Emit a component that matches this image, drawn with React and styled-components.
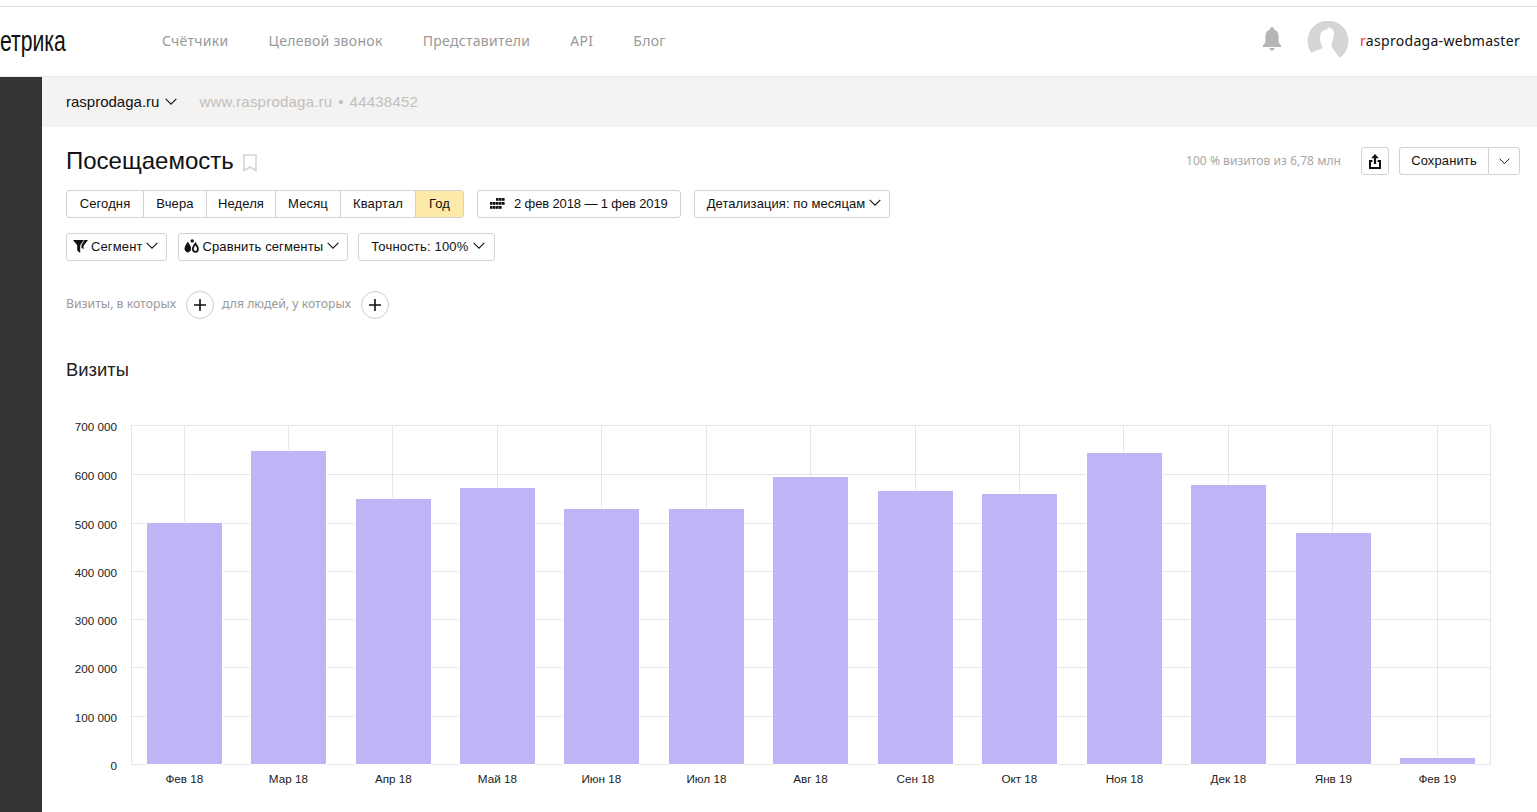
import React from "react";
import styled, { createGlobalStyle } from "styled-components";

const Global = createGlobalStyle`
  html, body { margin: 0; padding: 0; height: 100%; overflow: hidden; background: #fff; }
  body { font-family: "Liberation Sans", Arial, sans-serif; color: #000; }
  #root { height: 812px; }
`;

const Page = styled.div`
  width: 1537px;
  height: 812px;
  display: flex;
  flex-direction: column;
  overflow: hidden;
`;
const Header = styled.header`
  height: 69px;
  margin-top: 6px;
  border-top: 1px solid #dcdcdc;
  border-bottom: 1px solid #ebebeb;
  box-sizing: content-box;
  display: flex;
  align-items: center;
  padding-right: 17px;
  flex: none;
`;
const LogoBox = styled.div`
  width: 162px;
  flex: none;
  overflow: hidden;
  height: 100%;
  display: flex;
  align-items: center;
`;
const Logo = styled.span`
  display: inline-block;
  font-size: 29px;
  font-weight: 400;
  color: #111;
  transform: scaleX(0.73);
  transform-origin: left center;
`;
const Nav = styled.nav`
  display: flex;
  gap: 40px;
  flex: 1;
  margin-top: -2px;
`;
const NavItem = styled.a`
  font-family: "Noto Sans", sans-serif;
  font-size: 14px;
  color: #999;
  letter-spacing: 0.3px;
`;
const Bell = styled.svg`
  width: 20px;
  height: 26px;
  margin-right: 25px;
  margin-top: -3px;
`;
const Avatar = styled.svg`
  width: 42px;
  height: 40px;
  margin-right: 11px;
  margin-top: -1px;
`;
const UserName = styled.span`
  font-family: "Noto Sans", "Open Sans", sans-serif;
  font-size: 14px;
  color: #111;
  margin-top: -2px;
  letter-spacing: 0.3px;
  b { color: #f33; font-weight: 400; }
`;
const Body = styled.div`
  flex: 1;
  display: flex;
  min-height: 0;
`;
const Sidebar = styled.aside`
  width: 42px;
  background: #333;
  flex: none;
`;
const Main = styled.main`
  flex: 1;
  min-width: 0;
  display: flex;
  flex-direction: column;
`;
const SubHeader = styled.div`
  height: 50px;
  background: #f4f3f1;
  padding: 0 0 1px 24px;
  box-sizing: border-box;
  display: flex;
  align-items: center;
  font-size: 15px;
  flex: none;
`;
const SiteName = styled.span`
  color: #111;
  display: flex;
  align-items: center;
  gap: 6px;
`;
const SiteMeta = styled.span`
  margin-left: 22px;
  color: #c0c0c0;
  letter-spacing: 0.22px;
  word-spacing: 1.5px;
`;
const Content = styled.div`
  padding: 20px 17px 0 24px;
`;
const TitleRow = styled.div`
  height: 28px;
  display: flex;
  align-items: center;
`;
const Title = styled.h1`
  margin: 0;
  font-size: 24px;
  line-height: 28px;
  font-weight: 400;
  color: #111;
`;
const BookmarkIcon = styled.svg`
  width: 14px;
  height: 18px;
  margin-left: 9px;
  margin-top: 3px;
`;
const Coverage = styled.span`
  margin-left: auto;
  margin-right: 20px;
  margin-top: -2px;
  font-family: "Noto Sans", sans-serif;
  font-size: 12.1px;
  color: #a8a8a8;
`;
const Btn = styled.button`
  height: 28px;
  box-sizing: border-box;
  padding: 0 ${(p) => p.$pr ?? p.$pl ?? 12}px 2px ${(p) => p.$pl ?? 12}px;
  border: 1px solid #d2d2d2;
  border-radius: 3px;
  background: ${(p) => (p.$active ? "#fdeaa8" : "#fff")};
  color: #111;
  font: 13px "Liberation Sans", Arial, sans-serif;
  letter-spacing: ${(p) => p.$ls ?? 0.12}px;
  display: inline-flex;
  align-items: center;
  justify-content: center;
  gap: ${(p) => p.$gap ?? 4}px;
  margin-right: ${(p) => p.$mr ?? 0}px;
  white-space: nowrap;
  flex: none;
`;
const IconBtn = styled(Btn)`
  width: 28px;
  padding: 0;
  margin-right: 10px;
`;
const SaveGroup = styled.div`
  display: flex;
  width: 121px;
`;
const SaveBtn = styled(Btn)`
  flex: 1;
  border-radius: 3px 0 0 3px;
  border-right: 0;
  padding: 0 0 2px;
`;
const SaveArrow = styled(Btn)`
  width: 32px;
  padding: 0;
  border-radius: 0 3px 3px 0;
`;
const Row = styled.div`
  display: flex;
  margin-top: ${(p) => p.$mt}px;
  gap: ${(p) => p.$gap}px;
`;
const Group = styled.div`
  display: flex;
  margin-right: 3px;
`;
const SegBtn = styled(Btn)`
  border-radius: 0;
  margin-left: -1px;
  width: ${(p) => p.$w}px;
  padding: 0 0 2px;
  &:first-child { margin-left: 0; border-radius: 3px 0 0 3px; }
  &:last-child { border-radius: 0 3px 3px 0; }
`;
const FilterRow = styled.div`
  display: flex;
  align-items: center;
  margin-top: 30px;
  height: 28px;
  color: #999;
`;
const FilterLabel = styled.span`
  margin-top: -3px;
  font-family: "Noto Sans", sans-serif;
  font-size: 12.25px;
  margin-left: ${(p) => p.$ml ?? 0}px;
`;
const Round = styled.button`
  width: 28px;
  height: 28px;
  margin-left: 10px;
  padding: 0;
  border-radius: 50%;
  border: 1px solid #ccc;
  background: #fff;
  display: flex;
  align-items: center;
  justify-content: center;
`;
const SectionTitle = styled.h2`
  margin: 39px 0 0;
  font-size: 18.4px;
  line-height: 24px;
  font-weight: 400;
  color: #222;
`;
const ChartSvg = styled.svg`
  display: block;
  margin: 16px 0 0 -66px;
  width: 1537px;
  height: 390px;
`;

const Chevron = ({ size = 11 }) => (
  <svg width={size} height={size * 0.6} viewBox="0 0 11 6.6" fill="none">
    <path d="M.6.7l4.900 5 4.900-5" stroke="#111" strokeWidth="1" />
  </svg>
);

const CalendarIcon = () => (
  <svg width="15" height="11" viewBox="0 0 15 11" fill="#111" style={{ marginRight: 5 }}>
    {[
      [6, 0], [9, 0], [12, 0],
      [0, 4], [3, 4], [6, 4], [9, 4], [12, 4],
      [0, 8], [3, 8], [6, 8], [9, 8],
    ].map(([x, y]) => (
      <rect key={`${x}-${y}`} x={x} y={y} width="2.6" height="2.8" />
    ))}
  </svg>
);

const FunnelIcon = () => (
  <svg width="15" height="13" viewBox="0 0 15 13" fill="#111">
    <path d="M0 0h10.800L7.200 5.200V13L4.200 10.600V5.200z" />
    <path d="M11.400 0H15l-4.400 5.800v3.400L8.400 7.600V5.200z" />
  </svg>
);

const DropsIcon = () => (
  <svg width="15" height="14" viewBox="0 0 15 14" fill="none">
    <path d="M3.800 3.200C2.800 5.400 1 7 1 9.600 1 11.600 2.300 13 3.800 13s2.800-1.400 2.800-3.400c0-2.600-1.800-4.200-2.800-6.400z" fill="#111" stroke="#111" />
    <path d="M11.400 4.600c-1 1.800-2.500 3.200-2.500 5.200 0 1.700 1.100 3.100 2.500 3.100s2.500-1.400 2.500-3.100c0-2-1.500-3.400-2.500-5.200z" stroke="#111" strokeWidth="1.800" />
    <circle cx="8.200" cy="1.900" r="1.700" fill="#111" />
  </svg>
);

const ShareIcon = () => (
  <svg width="12" height="15" viewBox="0 0 12 15" fill="#111">
    <path d="M6 0l3.800 4.200H7.100V10H4.900V4.200H2.200z" />
    <path d="M0 6h3.400v1.900H2v5.200h8V7.900H8.600V6H12v9H0z" />
  </svg>
);

const PlusIcon = () => (
  <svg width="12" height="12" viewBox="0 0 12 12">
    <path d="M6 0v12M0 6h12" stroke="#111" strokeWidth="1.6" />
  </svg>
);

const periods = [
  ["Сегодня", 78],
  ["Вчера", 64],
  ["Неделя", 70],
  ["Месяц", 66],
  ["Квартал", 76],
  ["Год", 49],
];

const nav = ["Счётчики", "Целевой звонок", "Представители", "API", "Блог"];

const yTicks = [
  ["700 000", 425.5],
  ["600 000", 474.5],
  ["500 000", 523.5],
  ["400 000", 571.5],
  ["300 000", 619.5],
  ["200 000", 667.5],
  ["100 000", 716.5],
  ["0", 764.5],
];

const bars = [
  ["Фев 18", 523, 147],
  ["Мар 18", 451, 251],
  ["Апр 18", 499, 356],
  ["Май 18", 488, 460],
  ["Июн 18", 509, 564],
  ["Июл 18", 509, 669],
  ["Авг 18", 477, 773],
  ["Сен 18", 491, 878],
  ["Окт 18", 494, 982],
  ["Ноя 18", 453, 1087],
  ["Дек 18", 485, 1191],
  ["Янв 19", 533, 1296],
  ["Фев 19", 758, 1400],
];

const CHART_TOP = 398;
const fontStyle = { fontFamily: '"Liberation Sans", Arial, sans-serif', fontSize: 11.7, fill: "#222" };

const Chart = () => (
  <ChartSvg viewBox={`0 ${CHART_TOP} 1537 390`}>
    {yTicks.map(([label, y]) => (
      <g key={label}>
        <line x1="131" x2="1491" y1={y} y2={y} stroke="#e6e6e6" />
        <text x="117" y={y + 5} textAnchor="end" style={fontStyle}>{label}</text>
      </g>
    ))}
    <line x1="131.5" x2="131.5" y1="425" y2="765" stroke="#e6e6e6" />
    <line x1="1490.5" x2="1490.5" y1="425" y2="765" stroke="#e6e6e6" />
    {bars.map(([label, top, x], i) => (
      <g key={label + i}>
        <line
          x1={Math.round(183.6 + i * 104.42) + 0.5}
          x2={Math.round(183.6 + i * 104.42) + 0.5}
          y1="425"
          y2="765"
          stroke="#e6e6e6"
        />
        <rect
          x={x}
          y={top}
          width="75"
          height={764 - top}
          fill="#bfb4f5"
          stroke="#fff"
          strokeWidth="2"
          paintOrder="stroke"
        />
        <text x={x + 37.4} y="783" textAnchor="middle" style={fontStyle}>{label}</text>
      </g>
    ))}
  </ChartSvg>
);

export default function App() {
  return (
    <Page>
      <Global />
      <Header>
        <LogoBox><Logo>етрика</Logo></LogoBox>
        <Nav>
          {nav.map((n) => <NavItem key={n}>{n}</NavItem>)}
        </Nav>
        <Bell viewBox="0 0 20 26" fill="#b5b5b5">
          <path d="M10 0c1.200 0 2 .8 2 2v.6c3.200.9 4.600 3.600 4.600 7v5.200c0 1.400 1.400 2.200 2.400 3.400V20H1v-1.800c1-1.200 2.400-2 2.400-3.400V9.600c0-3.400 1.400-6.100 4.600-7V2c0-1.200.8-2 2-2z" />
          <path d="M7.400 21h5.200c-.2 1.500-1.200 2.500-2.600 2.500S7.600 22.500 7.400 21z" />
        </Bell>
        <Avatar viewBox="0 0 42 40">
          <circle cx="21" cy="20" r="20.500" fill="#d5d5d5" />
          <path d="M20.500 6.500c3.700 0 6.500 2.200 6.500 6 0 2.700-.8 3.800-1 5.500-.2 1.500-1.500 3.500-1.500 6 0 1.500.4 2.500 1.500 4l7.500 10-.5 2.500H0v-7l7-3c3-1.300 8.500-2.500 8.500-4.500 0-1-.8-1.500-1.300-3-.4-1-.7-1.200-.7-2.500 0-1-.8-1-.8-2.500 0-1 .5-1 .5-2.500 0-4.500 3.300-7 7.300-7z" fill="#fff" />
        </Avatar>
        <UserName><b>r</b>asprodaga-webmaster</UserName>
      </Header>
      <Body>
        <Sidebar />
        <Main>
          <SubHeader>
            <SiteName>rasprodaga.ru <Chevron size={12} /></SiteName>
            <SiteMeta>www.rasprodaga.ru • 44438452</SiteMeta>
          </SubHeader>
          <Content>
            <TitleRow>
              <Title>Посещаемость</Title>
              <BookmarkIcon viewBox="0 0 14 18" fill="none">
                <path d="M1 1h12v15.500l-6-3.500-6 3.500z" stroke="#d5d5d5" strokeWidth="1.6" />
              </BookmarkIcon>
              <Coverage>100 % визитов из 6,78 млн</Coverage>
              <IconBtn aria-label="Поделиться"><ShareIcon /></IconBtn>
              <SaveGroup>
                <SaveBtn>Сохранить</SaveBtn>
                <SaveArrow aria-label="Ещё"><Chevron /></SaveArrow>
              </SaveGroup>
            </TitleRow>
            <Row $mt={15} $gap={10}>
              <Group>
                {periods.map(([p, w]) => (
                  <SegBtn key={p} $w={w} $active={p === "Год"}>{p}</SegBtn>
                ))}
              </Group>
              <Btn $ls={-0.13} $mr={3}><CalendarIcon />2 фев 2018 — 1 фев 2019</Btn>
              <Btn $pr={8} $ls={0.08}>Детализация: по месяцам <Chevron size={12} /></Btn>
            </Row>
            <Row $mt={15} $gap={10}>
              <Btn $pl={6} $pr={8} $gap={3} $mr={1}><FunnelIcon />Сегмент <Chevron size={12} /></Btn>
              <Btn $pl={5} $pr={8}><DropsIcon />Сравнить сегменты <Chevron size={12} /></Btn>
              <Btn $pl={12} $pr={9} $ls={0.18}>Точность: 100% <Chevron size={12} /></Btn>
            </Row>
            <FilterRow>
              <FilterLabel>Визиты, в которых</FilterLabel>
              <Round aria-label="Добавить"><PlusIcon /></Round>
              <FilterLabel $ml={8}>для людей, у которых</FilterLabel>
              <Round aria-label="Добавить"><PlusIcon /></Round>
            </FilterRow>
            <SectionTitle>Визиты</SectionTitle>
            <Chart />
          </Content>
        </Main>
      </Body>
    </Page>
  );
}
